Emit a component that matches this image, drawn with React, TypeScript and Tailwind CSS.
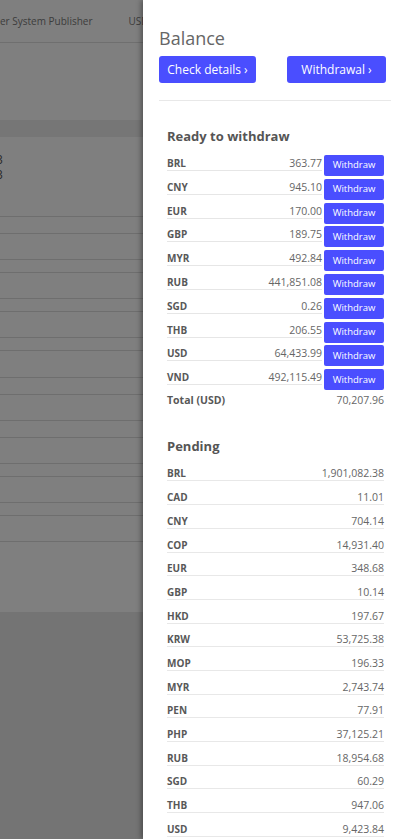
const ready: [string, string][] = [
  ['BRL', '363.77'],
  ['CNY', '945.10'],
  ['EUR', '170.00'],
  ['GBP', '189.75'],
  ['MYR', '492.84'],
  ['RUB', '441,851.08'],
  ['SGD', '0.26'],
  ['THB', '206.55'],
  ['USD', '64,433.99'],
  ['VND', '492,115.49'],
];

const pending: [string, string][] = [
  ['BRL', '1,901,082.38'],
  ['CAD', '11.01'],
  ['CNY', '704.14'],
  ['COP', '14,931.40'],
  ['EUR', '348.68'],
  ['GBP', '10.14'],
  ['HKD', '197.67'],
  ['KRW', '53,725.38'],
  ['MOP', '196.33'],
  ['MYR', '2,743.74'],
  ['PEN', '77.91'],
  ['PHP', '37,125.21'],
  ['RUB', '18,954.68'],
  ['SGD', '60.29'],
  ['THB', '947.06'],
  ['USD', '9,423.84'],
];

// row heights of the table behind the drawer
const bgRows = [17, 26, 13, 26, 13, 26, 13, 27, 17, 26, 17, 26, 13, 26, 13, 26, 71];

function BackgroundPage() {
  return (
    <div className="w-full">
      <div className="flex h-[43px] items-center border-b border-[#dedede] bg-white text-[10px] text-[#7a7a7a]">
        <span className="whitespace-nowrap">er System Publisher</span>
        <span className="ml-[36px]">USD</span>
      </div>
      <div className="h-[77px] bg-white" />
      <div className="h-[17px] bg-[#ececec]" />
      <div className="h-[79px] bg-white pt-[15px] text-[12px] leading-[15px] text-[#555]">
        <p className="-ml-[4px]">3</p>
        <p className="-ml-[4px]">3</p>
      </div>
      {bgRows.map((h, i) => (
        <div key={i} className="border-t border-[#dcdcdc] bg-white" style={{ height: h }} />
      ))}
    </div>
  );
}

function ReadyRow({ code, amount }: { code: string; amount: string }) {
  return (
    <div className="mb-[2.8px] flex items-start">
      <div className="flex h-[16px] flex-1 items-end justify-between border-b border-[#e6e6e6] leading-[14px]">
        <span className="text-[10px] font-bold text-[#585858]">{code}</span>
        <span className="text-[10.5px] text-[#666]">{amount}</span>
      </div>
      <button className="ml-[2px] h-[21px] w-[60px] rounded-[2px] bg-[#4a4eff] text-[9.5px] text-white">
        Withdraw
      </button>
    </div>
  );
}

function PendingRow({ code, amount }: { code: string; amount: string }) {
  return (
    <div className="flex h-[23.7px] items-end justify-between border-b border-[#e8e8e8] leading-[14px]">
      <span className="text-[10px] font-bold text-[#585858]">{code}</span>
      <span className="text-[10.5px] text-[#666]">{amount}</span>
    </div>
  );
}

export default function App() {
  return (
    <div className="relative h-[839px] w-[404px] overflow-hidden bg-[#e8e8e8] font-['Open_Sans','Noto_Sans',sans-serif]">
      <BackgroundPage />
      <div className="absolute inset-0 bg-black/50" />

      <aside className="absolute right-0 top-0 h-full w-[261px] bg-white pl-4 pr-[13px] pt-[26px] shadow-[-2px_0_5px_rgba(0,0,0,0.35)]">
        <h2 className="text-[18px] leading-6 text-[#666]">Balance</h2>
        <div className="mt-[6px] flex">
          <button className="h-[27px] w-[97px] rounded-[3px] bg-[#4a4eff] text-[12px] text-white">
            Check details ›
          </button>
          <button className="ml-[31px] h-[27px] w-[99px] rounded-[3px] bg-[#4a4eff] text-[12px] text-white">
            Withdrawal ›
          </button>
        </div>
        <div className="mt-[17px] border-t border-[#e8e8e8]" />

        <section className="mt-[26px] pl-2 pr-[7px]">
          <h3 className="text-[13px] font-bold leading-[18px] text-[#555]">Ready to withdraw</h3>
          <div className="mt-[10px]">
            {ready.map(([c, a]) => (
              <ReadyRow key={c} code={c} amount={a} />
            ))}
          </div>
          <div className="mt-[3px] flex justify-between leading-[14px]">
            <span className="text-[10.5px] font-bold text-[#585858]">Total (USD)</span>
            <span className="text-[10.5px] text-[#666]">70,207.96</span>
          </div>

          <h3 className="mt-[30px] text-[13px] font-bold leading-[18px] text-[#555]">Pending</h3>
          <div className="mt-[2.6px]">
            {pending.map(([c, a]) => (
              <PendingRow key={c} code={c} amount={a} />
            ))}
          </div>
        </section>
      </aside>
    </div>
  );
}
